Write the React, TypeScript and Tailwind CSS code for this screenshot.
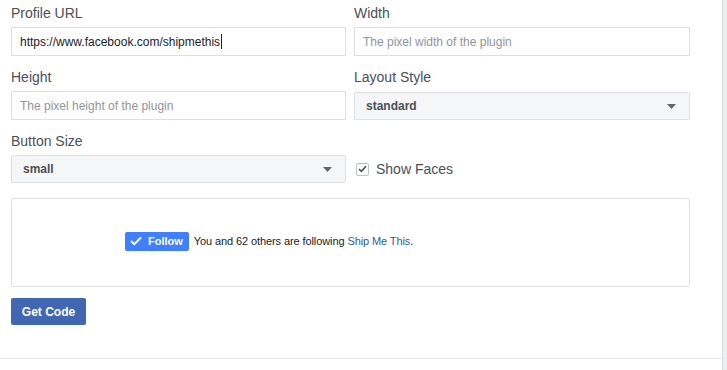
import React from "react";

const font = { fontFamily: '"Liberation Sans", Arial, Helvetica, sans-serif' };

function Label({ children }: { children: React.ReactNode }) {
  return <div className="h-[18px] mb-[5px] text-[14px] leading-[18px] text-[#4b4f56]">{children}</div>;
}

function TextInput({ value, placeholder, caret }: { value?: string; placeholder?: string; caret?: boolean }) {
  return (
    <div className="h-[29px] border border-[#dddfe2] bg-white flex items-center px-[8px] text-[12px]">
      {value ? (
        <span className="text-[#1d2129] flex items-center">
          {value}
          {caret && <span className="inline-block w-[1px] h-[15px] bg-[#1d2129] ml-[1px]" />}
        </span>
      ) : (
        <span className="text-[#90949c]">{placeholder}</span>
      )}
    </div>
  );
}

function Select({ value }: { value: string }) {
  return (
    <div className="h-[28px] border border-[#dddfe2] bg-[#f5f6f7] rounded-[2px] flex items-center justify-between pl-[11px] pr-[13px] text-[12px] font-bold text-[#4b4f56]">
      <span>{value}</span>
      <svg width="9" height="5" viewBox="0 0 9 5">
        <path d="M0 0 L9 0 L4.5 5 Z" fill="#606770" />
      </svg>
    </div>
  );
}

export default function App() {
  return (
    <div className="w-[727px] h-[370px] flex bg-white overflow-hidden" style={font}>
      <div className="w-[722px] flex flex-col">
        <div className="px-[11px] pt-[4px] w-[690px] box-content">
          <div className="grid grid-cols-[335px_336px] gap-x-[8px] gap-y-[12px]">
            <div>
              <Label>Profile URL</Label>
              <TextInput value="https://www.facebook.com/shipmethis" caret />
            </div>
            <div>
              <Label>Width</Label>
              <TextInput placeholder="The pixel width of the plugin" />
            </div>
            <div>
              <Label>Height</Label>
              <TextInput placeholder="The pixel height of the plugin" />
            </div>
            <div>
              <Label>Layout Style</Label>
              <div className="pt-[1px]">
                <Select value="standard" />
              </div>
            </div>
            <div>
              <Label>Button Size</Label>
              <Select value="small" />
            </div>
            <div className="flex items-end">
              <div className="h-[28px] flex items-center pl-[2px]">
                <div className="w-[13px] h-[13px] border border-[#bec3c9] rounded-[2px] bg-white flex items-center justify-center">
                  <svg width="9" height="8" viewBox="0 0 9 8">
                    <path d="M1 4.2 L3.4 6.4 L8 1.3" stroke="#4b4f56" strokeWidth="1.6" fill="none" />
                  </svg>
                </div>
                <span className="ml-[7px] text-[14px] text-[#4b4f56]">Show Faces</span>
              </div>
            </div>
          </div>
          <div className="mt-[15px] w-[679px] h-[89px] border border-[#dddfe2] rounded-[3px] flex items-center pl-[113px] pb-[3px]">
            <div className="h-[19px] pl-[5px] pr-[6px] bg-[#4080ff] rounded-[2px] flex items-center text-white text-[11px] font-bold">
              <svg width="12" height="10" viewBox="0 0 12 10" className="mr-[6px]">
                <path d="M1 5 L4.3 8.2 L11 1.5" stroke="white" strokeWidth="2" fill="none" />
              </svg>
              Follow
            </div>
            <span className="ml-[5px] text-[11px] text-[#1d2129] tracking-[-0.1px]">
              You and 62 others are following <span className="text-[#365899]">Ship Me This</span>.
            </span>
          </div>
          <div className="mt-[11px]">
            <button className="h-[27px] w-[75px] bg-[#4267b2] rounded-[2px] text-white text-[12px] font-bold">Get Code</button>
          </div>
        </div>
        <div className="mt-[33px] border-t border-[#e5e6e9]" />
      </div>
      <div className="w-[5px] h-full bg-[#eceef1] border-l border-[#d7dae0]" />
    </div>
  );
}
